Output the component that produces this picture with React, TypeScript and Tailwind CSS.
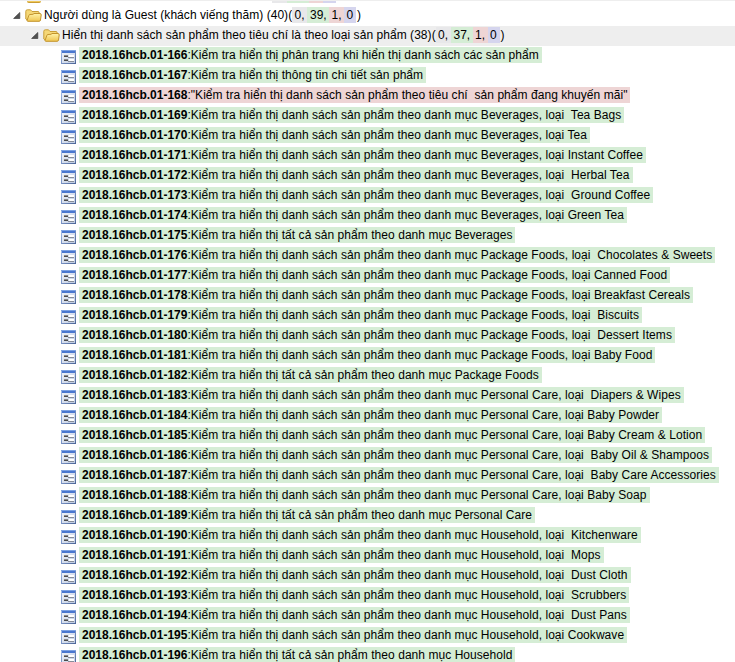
import React from "react";

const B = "Kiểm tra hiển thị danh sách sản phẩm theo danh mục ";
const ALL = "Kiểm tra hiển thị tất cả sản phẩm theo danh mục ";

const cases: [number, string, number][] = [
  [166, "Kiểm tra hiển thị phân trang khi hiển thị danh sách các sản phẩm", 542],
  [167, "Kiểm tra hiển thị thông tin chi tiết sản phẩm", 426],
  [168, "\"Kiểm tra hiển thị danh sách sản phẩm theo tiêu chí  sản phẩm đang khuyến mãi\"", 630],
  [169, B + "Beverages, loại  Tea Bags", 624],
  [170, B + "Beverages, loại Tea", 590],
  [171, B + "Beverages, loại Instant Coffee", 646],
  [172, B + "Beverages, loại  Herbal Tea", 633],
  [173, B + "Beverages, loại  Ground Coffee", 653],
  [174, B + "Beverages, loại Green Tea", 627],
  [175, ALL + "Beverages", 515],
  [176, B + "Package Foods, loại  Chocolates & Sweets", 715],
  [177, B + "Package Foods, loại Canned Food", 670],
  [178, B + "Package Foods, loại Breakfast Cereals", 693],
  [179, B + "Package Foods, loại  Biscuits", 642],
  [180, B + "Package Foods, loại  Dessert Items", 675],
  [181, B + "Package Foods, loại Baby Food", 655],
  [182, ALL + "Package Foods", 542],
  [183, B + "Personal Care, loại  Diapers & Wipes", 684],
  [184, B + "Personal Care, loại Baby Powder", 662],
  [185, B + "Personal Care, loại Baby Cream & Lotion", 705],
  [186, B + "Personal Care, loại  Baby Oil & Shampoos", 712],
  [187, B + "Personal Care, loại  Baby Care Accessories", 719],
  [188, B + "Personal Care, loại Baby Soap", 650],
  [189, ALL + "Personal Care", 535],
  [190, B + "Household, loại  Kitchenware", 641],
  [191, B + "Household, loại  Mops", 604],
  [192, B + "Household, loại  Dust Cloth", 631],
  [193, B + "Household, loại  Scrubbers", 629],
  [194, B + "Household, loại  Dust Pans", 630],
  [195, B + "Household, loại Cookwave", 627],
  [196, ALL + "Household", 515],
];

function Folder() {
  return (
    <svg width="17" height="16" viewBox="0 0 17 16" className="shrink-0">
      <defs>
        <linearGradient id="front" x1="0" y1="0" x2="0" y2="1">
          <stop offset="0" stopColor="#fff3a8" />
          <stop offset="1" stopColor="#efc551" />
        </linearGradient>
      </defs>
      <path d="M.8 12V4.300Q.8 2.800 2.300 2.800H5.500L7 4.500H13Q14.200 4.500 14.200 6V13H2Z" fill="#f5d878" stroke="#c99f38" />
      <path d="M2 13.500 3.800 8.500Q4 7.500 5 7.500L8 7.300 9 6.500H15Q16.300 6.500 16.200 8L15.500 13Q15.300 14.300 14.200 14.300H3Q2 14.300 2 13.500Z" fill="url(#front)" stroke="#c3942c" />
    </svg>
  );
}

function Arrow() {
  return (
    <svg width="8" height="7" viewBox="0 0 8 7" className="shrink-0">
      <path d="M6.800.5V6.500H.6z" fill="#505050" stroke="#404040" strokeWidth=".7" strokeLinejoin="round" />
    </svg>
  );
}

function CaseIcon() {
  return (
    <svg width="15" height="14" viewBox="0 0 15 14" className="shrink-0" shapeRendering="crispEdges">
      <defs>
        <linearGradient id="frame" x1="0" y1="0" x2="1" y2="1">
          <stop offset="0" stopColor="#a5c0ef" />
          <stop offset="1" stopColor="#4a6294" />
        </linearGradient>
        <linearGradient id="body" x1="0" y1="0" x2="1" y2="1">
          <stop offset="0" stopColor="#eef1f8" />
          <stop offset="1" stopColor="#bfcce2" />
        </linearGradient>
      </defs>
      <rect width="15" height="14" fill="url(#frame)" />
      <rect width="15" height="1" fill="#7ea2e2" />
      <rect x="1" y="1" width="13" height="2" fill="#4977cf" />
      <rect x="1" y="3" width="13" height="10" fill="url(#body)" />
      <rect x="3" y="5" width="4" height="1" fill="#8b8b8b" />
      <rect x="3" y="6" width="4" height="1" fill="#4b4b4b" />
      <rect x="8" y="5" width="5" height="2" fill="#fff" />
      <rect x="7" y="7" width="6" height="1" fill="#888e99" />
      <rect x="3" y="9" width="4" height="1" fill="#8b8b8b" />
      <rect x="3" y="10" width="4" height="1" fill="#4b4b4b" />
      <rect x="8" y="9" width="5" height="2" fill="#fff" />
      <rect x="7" y="11" width="6" height="1" fill="#888e99" />
    </svg>
  );
}

function Counts({ values }: { values: number[] }) {
  return (
    <span className="flex h-4 leading-4">
      <span className="w-[15px] bg-[#e8e8ea] pl-[2.5px]">{values[0]},</span>
      <span className="w-[22px] bg-[#d5edd5] pl-[3px]">{values[1]},</span>
      <span className="w-[15px] bg-[#eed5d5] pl-[2.5px]">{values[2]},</span>
      <span className="w-[12px] bg-[#d5d5ee] pl-[2.5px]">{values[3]}</span>
    </span>
  );
}

export default function App() {
  return (
    <div className="h-[662px] w-[735px] overflow-hidden bg-white font-['Liberation_Sans',Arial,sans-serif] text-[12px] whitespace-pre text-black">
      <div className="flex h-[6px] items-start border-t border-[#eee]">
        <div className="ml-[27px] h-[2px] w-[14px] rounded-b-sm border-b border-[#c99c34] bg-[#f0c95c]" />
        <div className="ml-[231px] flex h-[2px]">
          <div className="w-[15px] bg-[#e8e8ea]" />
          <div className="w-[22px] bg-[#d5edd5]" />
          <div className="w-[14px] bg-[#eed5d5]" />
          <div className="w-[13px] bg-[#d5d5ee]" />
        </div>
      </div>
      <div className="flex h-5 items-start pl-[13px]">
        <div className="pt-[6px]"><Arrow /></div>
        <div className="ml-[4px] pt-px"><Folder /></div>
        <span className="ml-[2px] w-[248px] pt-px leading-4 tracking-[0.05px]">Người dùng là Guest (khách viếng thăm) (40)(</span>
        <div className="pt-px"><Counts values={[0, 39, 1, 0]} /></div>
        <span className="pt-px pl-px leading-4">)</span>
      </div>
      <div className="flex h-5 items-start bg-[#eee] pl-[31px]">
        <div className="pt-[6px]"><Arrow /></div>
        <div className="ml-[4px] pt-px"><Folder /></div>
        <span className="ml-[2px] w-[373.500px] pt-px leading-4 tracking-[0.05px]">Hiển thị danh sách sản phẩm theo tiêu chí là theo loại sản phẩm (38)(</span>
        <div className="pt-px"><Counts values={[0, 37, 1, 0]} /></div>
        <span className="pt-px pl-px leading-4">)</span>
      </div>
      {cases.map(([id, title, right]) => (
        <div key={id} className="flex h-5 items-start pl-[61px]">
          <div className="pt-1"><CaseIcon /></div>
          <div
            className={`mt-px ml-[3px] h-4 shrink-0 pl-[3px] leading-4 ${id === 168 ? "bg-[#eed5d5]" : "bg-[#d5edd5]"}`}
            style={{ width: right - 79 }}
          >
            <b>2018.16hcb.01-{id}</b>:<span className="tracking-[0.05px]">{title}</span>
          </div>
        </div>
      ))}
    </div>
  );
}
